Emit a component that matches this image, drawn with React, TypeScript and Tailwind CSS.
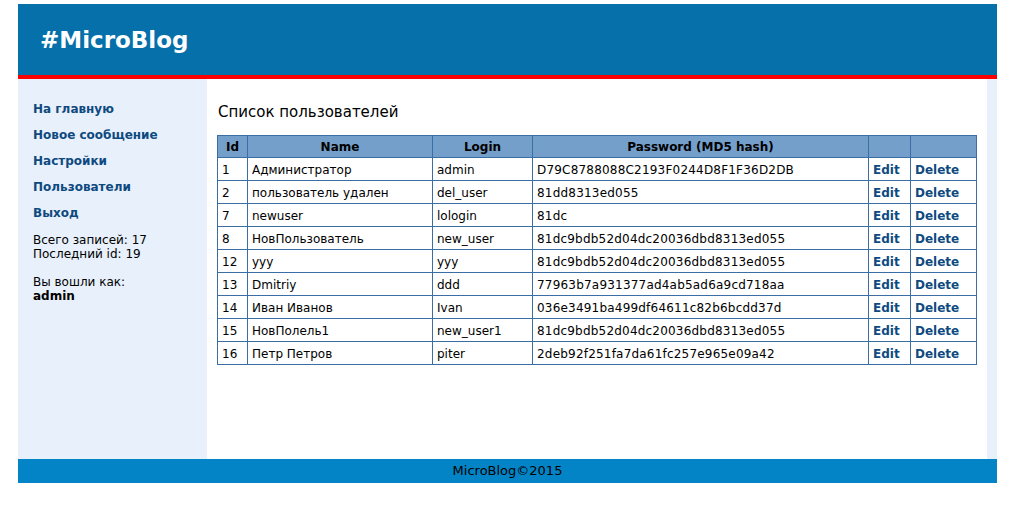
const USERS = [
  { id: 1, name: 'Администратор', login: 'admin', hash: 'D79C8788088C2193F0244D8F1F36D2DB' },
  { id: 2, name: 'пользователь удален', login: 'del_user', hash: '81dd8313ed055' },
  { id: 7, name: 'newuser', login: 'lologin', hash: '81dc' },
  { id: 8, name: 'НовПользователь', login: 'new_user', hash: '81dc9bdb52d04dc20036dbd8313ed055' },
  { id: 12, name: 'yyy', login: 'yyy', hash: '81dc9bdb52d04dc20036dbd8313ed055' },
  { id: 13, name: 'Dmitriy', login: 'ddd', hash: '77963b7a931377ad4ab5ad6a9cd718aa' },
  { id: 14, name: 'Иван Иванов', login: 'Ivan', hash: '036e3491ba499df64611c82b6bcdd37d' },
  { id: 15, name: 'НовПолель1', login: 'new_user1', hash: '81dc9bdb52d04dc20036dbd8313ed055' },
  { id: 16, name: 'Петр Петров', login: 'piter', hash: '2deb92f251fa7da61fc257e965e09a42' },
];

const MENU = ['На главную', 'Новое сообщение', 'Настройки', 'Пользователи', 'Выход'];

const cell = 'border border-[#3b6ea5] h-[23px] px-[4px] pt-[2px] pb-0 text-left';
const head = 'border border-[#3b6ea5] h-[22px] p-0 text-center font-bold';

export default function App() {
  return (
    <div className="min-h-[508px] bg-white pt-[4px] font-['DejaVu_Sans',Verdana,sans-serif] text-[12px] text-black">
      <div className="ml-[18px] w-[979px] bg-[#e8f0fb]">
        <header className="h-[75px] border-b-4 border-[#ff0000] bg-[#0570a9] pl-[22px] pt-[22px]">
          <h1 className="text-[23px] font-bold leading-[28px] text-white">#MicroBlog</h1>
        </header>

        <div className="flex h-[380px]">
          <aside className="w-[189px] pl-[15px] pt-[21px]">
            <nav className="flex flex-col gap-[8px]">
              {MENU.map((m) => (
                <a key={m} href="#" className="block text-[12px] font-bold leading-[18px] text-[#0e4a7f]">
                  {m}
                </a>
              ))}
            </nav>
            <p className="mt-[11px] leading-[14px]">
              Всего записей: 17
              <br />
              Последний id: 19
            </p>
            <p className="mt-[14px] leading-[14px]">
              Вы вошли как:
              <br />
              <b>admin</b>
            </p>
          </aside>

          <main className="w-[780px] bg-white pl-[10px] pt-[24px]">
            <h2 className="pl-px text-[15px] font-normal leading-[18px]">Список пользователей</h2>
            <table className="mt-[14px] w-[760px] border-collapse">
              <thead>
                <tr className="bg-[#759fcb]">
                  <th className={`${head} w-[30px]`}>Id</th>
                  <th className={`${head} w-[185px]`}>Name</th>
                  <th className={`${head} w-[100px]`}>Login</th>
                  <th className={`${head} w-[336px]`}>Password (MD5 hash)</th>
                  <th className={`${head} w-[42px]`}></th>
                  <th className={head}></th>
                </tr>
              </thead>
              <tbody>
                {USERS.map((u) => (
                  <tr key={u.id}>
                    <td className={cell}>{u.id}</td>
                    <td className={cell}>{u.name}</td>
                    <td className={cell}>{u.login}</td>
                    <td className={`${cell} tracking-[0.2px]`}>{u.hash}</td>
                    <td className={cell}>
                      <a href="#" className="font-bold text-[#0e4a7f]">Edit</a>
                    </td>
                    <td className={cell}>
                      <a href="#" className="font-bold text-[#0e4a7f]">Delete</a>
                    </td>
                  </tr>
                ))}
              </tbody>
            </table>
          </main>
        </div>

        <footer className="flex h-[24px] items-center justify-center bg-[#0384c6] text-[13px] text-black">
          MicroBlog©2015
        </footer>
      </div>
    </div>
  );
}
